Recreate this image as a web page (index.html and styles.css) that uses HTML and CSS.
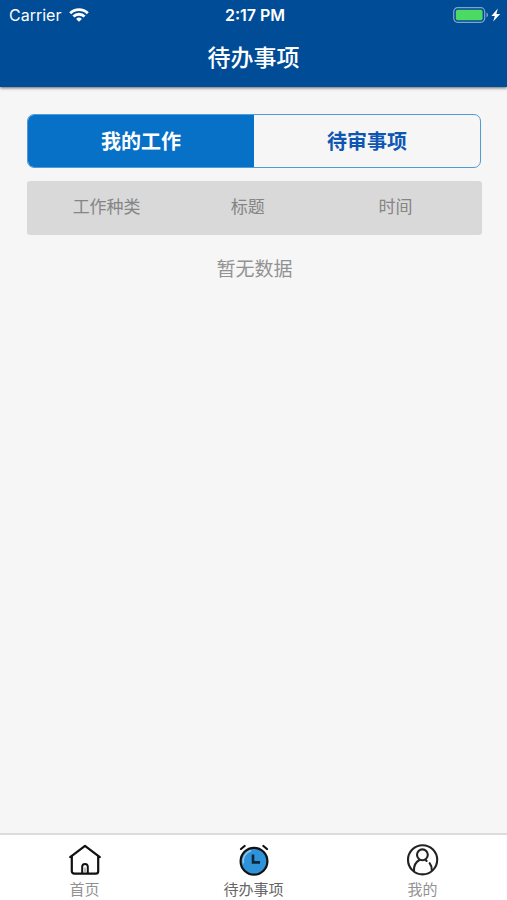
FILE: index.html
```html
<!DOCTYPE html>
<html lang="zh-CN">
<head>
<meta charset="utf-8">
<meta name="viewport" content="width=device-width, initial-scale=1">
<title>待办事项</title>
<link rel="stylesheet" href="styles.css">
</head>
<body>
<header class="header">
  <div class="status">
    <div class="status-left">
      <span>Carrier</span>
      <svg class="wifi" viewBox="0 0 20 14" aria-hidden="true">
        <g fill="none" stroke="#fff" stroke-width="2.8">
          <path d="M1.2 5.3a12.4 12.4 0 0 1 17.6 0"/>
          <path d="M4.4 8.6a7.9 7.9 0 0 1 11.2 0"/>
        </g>
        <path d="M10 13.8l-2.9-2.9a4.1 4.1 0 0 1 5.8 0z" fill="#fff"/>
      </svg>
    </div>
    <span class="time">2:17 PM</span>
    <div class="status-right">
      <svg class="battery" viewBox="0 0 48 16" aria-hidden="true">
        <rect x="0.7" y="0.7" width="31" height="14.6" rx="4" fill="none" stroke="#7fa5cb" stroke-width="1.2"/>
        <rect x="2.8" y="2.8" width="26.8" height="10.4" rx="1.8" fill="#4cd964"/>
        <path d="M33.5 5.6c2 .8 2 4 0 4.8z" fill="#7fa5cb"/>
        <path d="M44.8 1.6l-6.4 7.4h3.4l-1.6 5.6 7-7.6h-3.8z" fill="#fff"/>
      </svg>
    </div>
  </div>
  <h1 class="title">待办事项</h1>
</header>
<main class="content">
  <div class="tabs">
    <button class="tab tab-active" type="button">我的工作</button>
    <button class="tab" type="button">待审事项</button>
  </div>
  <table class="list">
    <thead>
      <tr><th class="col-kind">工作种类</th><th class="col-title">标题</th><th class="col-time">时间</th></tr>
    </thead>
    <tbody>
      <tr><td class="empty" colspan="3">暂无数据</td></tr>
    </tbody>
  </table>
</main>
<nav class="nav">
  <a class="nav-item" href="#home">
    <svg class="icon" viewBox="0 0 32 32" fill="none" stroke="#111" stroke-width="2.2" stroke-linecap="round" stroke-linejoin="round" aria-hidden="true">
      <path d="M1.2 13.2L16 1.8l14.8 11.4"/>
      <path d="M2.8 12.4v14.8a2.4 2.4 0 0 0 2.4 2.4h21.6a2.4 2.4 0 0 0 2.4-2.4V12.4"/>
      <path d="M13.2 29v-6.2a2.8 2.8 0 0 1 5.6 0V29" stroke-width="2"/>
      <path d="M16 24v4.6" stroke="#777" stroke-width="1"/>
    </svg>
    <span>首页</span>
  </a>
  <a class="nav-item nav-active" href="#todo">
    <svg class="icon" viewBox="0 0 32 32" fill="none" aria-hidden="true">
      <circle cx="16" cy="17.2" r="13.4" fill="#2e93d9" stroke="#111" stroke-width="2.2"/>
      <path d="M5.3 19.4A11 11 0 0 1 13.2 6.6" stroke="#8dc4ea" stroke-width="1.6"/>
      <path d="M15 10.6v7.8h7" stroke="#102638" stroke-width="2.6"/>
      <path d="M3 5l3.6-3M25.4 2l3.6 3" stroke="#111" stroke-width="2.2" stroke-linecap="round"/>
    </svg>
    <span>待办事项</span>
  </a>
  <a class="nav-item" href="#me">
    <svg class="icon" viewBox="0 0 32 32" fill="none" stroke="#222" stroke-width="2.1" stroke-linecap="round" aria-hidden="true">
      <circle cx="15.6" cy="15.8" r="14.6"/>
      <circle cx="15.4" cy="10.8" r="5.4"/>
      <path d="M7 27.2c-.4-5.4 1.8-9.2 5.4-11.2M18.4 15.6l1.2 1.4M22.6 19.2c1.6 2 2.4 4.4 2.2 7.2"/>
    </svg>
    <span>我的</span>
  </a>
</nav>
</body>
</html>
```
FILE: styles.css
```css
* {
  box-sizing: border-box;
}

body {
  margin: 0;
  min-height: 100vh;
  display: flex;
  flex-direction: column;
  background: #f6f6f6;
  font-family: Inter, "Noto Sans CJK SC", sans-serif;
}

.header {
  background: #004c97;
  color: #fff;
  box-shadow: 0 1px 3px rgba(0, 0, 0, 0.6);
}

.status {
  display: grid;
  grid-template-columns: 1fr auto 1fr;
  align-items: center;
  height: 30px;
  padding: 0 6px 0 9px;
  font-size: 16px;
}

.status-left {
  display: flex;
  align-items: center;
  gap: 8px;
}

.status-right {
  display: flex;
  justify-content: flex-end;
}

.wifi {
  width: 20px;
  height: 14px;
}

.battery {
  width: 48px;
  height: 16px;
}

.time {
  font-weight: 600;
}

.title {
  margin: 0;
  font-size: 23px;
  font-weight: 500;
  line-height: 57px;
  text-align: center;
}

.content {
  flex: 1;
  padding: 27px 25px 27px 27px;
}

.tabs {
  display: flex;
  height: 54px;
  margin: 0 1px 13px 0;
  border: 1px solid #4f9bd6;
  border-radius: 7px;
  overflow: hidden;
}

.tab {
  flex: 1;
  padding: 0 0 2px;
  border: 0;
  background: transparent;
  color: #0f56b3;
  font-family: inherit;
  font-size: 20px;
  font-weight: 700;
}

.tab-active {
  background: #0771c8;
  color: #fff;
}

.list {
  width: 100%;
  table-layout: fixed;
  border-spacing: 0;
}

.list th {
  height: 54px;
  padding: 0 0 5px;
  background: #d9d9d9;
  color: #858585;
  font-size: 17px;
  font-weight: 400;
}

.list .col-kind {
  width: 35%;
  border-radius: 3px 0 0 3px;
}

.list .col-title {
  width: 27%;
}

.list .col-time {
  border-radius: 0 3px 3px 0;
}

.list .empty {
  padding: 21px 0 0;
  color: #929292;
  font-size: 19px;
  line-height: 28px;
  text-align: center;
}

.nav {
  display: flex;
  height: 67px;
  border-top: 2px solid #dcdcdc;
  background: #fff;
}

.nav-item {
  flex: 1;
  display: flex;
  flex-direction: column;
  align-items: center;
  gap: 3px;
  padding-top: 9px;
  color: #929292;
  font-size: 15px;
  line-height: 22px;
  text-decoration: none;
}

.nav-active {
  color: #666;
}

.icon {
  flex: none;
  width: 32px;
  height: 32px;
}
```
